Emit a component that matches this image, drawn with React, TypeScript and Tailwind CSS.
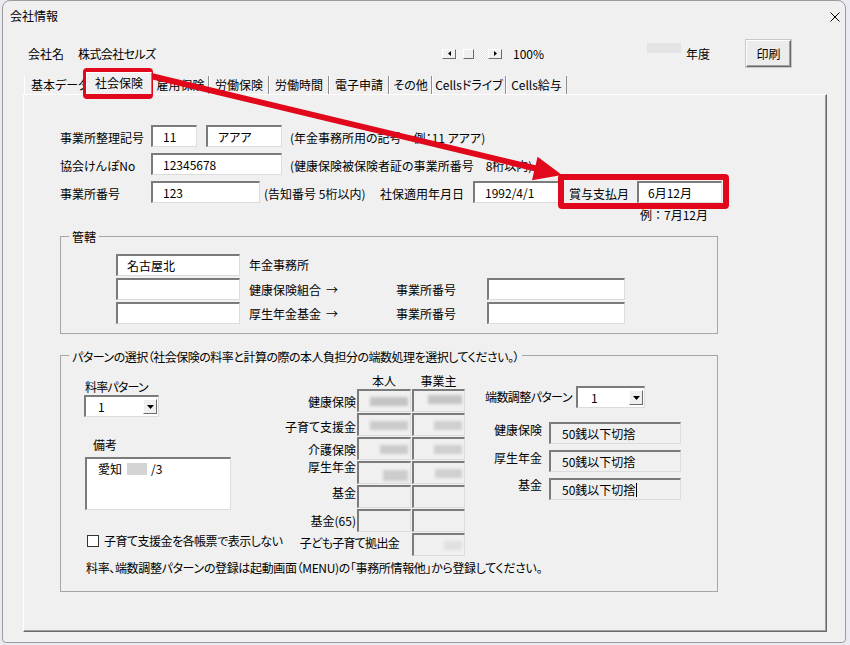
import React from "react";

type Kids = { children?: React.ReactNode; className?: string };

// Sunken edit box (classic VBA form look)
function Field({ children, className = "", ro = false }: Kids & { ro?: boolean }) {
  return (
    <div
      className={`flex shrink-0 items-center border-t-2 border-l-2 border-r border-b border-t-[#7b7b7b] border-l-[#7b7b7b] border-r-[#dcdcdc] border-b-[#dcdcdc] ${
        ro ? "bg-[#f0f0f0]" : "bg-white"
      } ${className}`}
    >
      {children}
    </div>
  );
}

const raised =
  "border border-t-white border-l-white border-r-[#6b6b6b] border-b-[#6b6b6b] bg-[#f0f0f0]";

function DropTri() {
  return (
    <svg width="7" height="4" viewBox="0 0 7 4">
      <path d="M0 0H7L3.5 4Z" fill="#000" />
    </svg>
  );
}

function Combo({ className = "" }: { className?: string }) {
  return (
    <Field className={`justify-between pr-[1px] ${className}`}>
      <span>1</span>
      <div className={`flex h-[15px] w-[14px] items-center justify-center ${raised}`}>
        <DropTri />
      </div>
    </Field>
  );
}

function GroupBox({
  title,
  className = "",
  legendClass = "",
  children,
}: Kids & { title: string; legendClass?: string }) {
  return (
    <div className={`relative border border-[#a6a6a6] ${className}`}>
      <span className={`absolute left-[8px] whitespace-nowrap bg-[#f0f0f0] px-[3px] leading-[16px] ${legendClass}`}>
        {title}
      </span>
      {children}
    </div>
  );
}

function Blur({ className = "" }: { className?: string }) {
  return <span className={`block blur-[1.5px] ${className}`} />;
}

const tabs = [
  { label: "雇用保険", w: "w-[57px]" },
  { label: "労働保険", w: "w-[60px]" },
  { label: "労働時間", w: "w-[60px]" },
  { label: "電子申請", w: "w-[60px]" },
  { label: "その他", w: "w-[43px]" },
  { label: "Cellsドライブ", w: "w-[74px]" },
  { label: "Cells給与", w: "w-[61px]" },
];

const premiumRows = [
  { label: "健康保険", lc: "pt-[5px]", a: "w-[38px] h-[9px] bg-[#c4c4c4]", b: "w-[34px] h-[9px] bg-[#c4c4c4] mb-[3px]" },
  { label: "子育て支援金", lc: "pt-[6px]", a: "w-[38px] h-[9px] bg-[#cbcbcb]", b: "w-[28px] h-[9px] bg-[#d0d0d0]" },
  { label: "介護保険", lc: "pt-[5px]", a: "w-[28px] h-[9px] bg-[#cbcbcb]", b: "w-[28px] h-[9px] bg-[#d0d0d0]" },
  { label: "厚生年金", lc: "-mt-[2px]", a: "w-[25px] h-[11px] bg-[#cdcdcd] mt-[4px]", b: "w-[27px] h-[9px] bg-[#d0d0d0]" },
  { label: "基金", lc: "pt-0", a: "", b: "" },
  { label: "基金(65)", lc: "pt-[4px]", a: "", b: "" },
];

const roundRows = [
  { label: "健康保険", lc: "pt-0" },
  { label: "厚生年金", lc: "pt-0" },
  { label: "基金", lc: "-mt-[1px]", caret: true },
];

export default function App() {
  return (
    <div className="relative h-[645px] w-[850px] overflow-hidden bg-[#e8ecf2] text-[12px] leading-[16px] text-black [font-family:'Noto_Sans_CJK_JP',sans-serif] [font-feature-settings:'palt']">
      <div className="ml-[2px] flex h-[643px] w-[844px] flex-col rounded-t-[8px] rounded-b-[4px] border border-[#9c9c9c] bg-[#f0f0f0]">
        {/* title bar */}
        <div className="flex h-[30px] items-center justify-between pl-[7px] pr-[5px]">
          <span>会社情報</span>
          <svg width="10" height="10" viewBox="0 0 10 10" className="mt-[1px]">
            <path d="M0.5 0.5L9.5 9.5M9.5 0.5L0.5 9.5" stroke="#000" strokeWidth="1" />
          </svg>
        </div>

        {/* company header */}
        <div className="mt-[9px] flex h-[27px] items-center pl-[25px]">
          <div className="flex w-[414px] items-center">
            <span className="w-[50px]">会社名</span>
            <span className="tracking-[-0.6px]">株式会社セルズ</span>
          </div>
          <div className="flex w-[71px] items-center">
            <div className={`flex h-[10px] w-[14px] items-center justify-center ${raised}`}>
              <svg width="3" height="5" viewBox="0 0 3 5">
                <path d="M3 0V5L0 2.5Z" fill="#000" />
              </svg>
            </div>
            <div className="h-[10px] w-[7px] bg-[#f4f4f4]" />
            <div className={`h-[10px] w-[11px] ${raised}`} />
            <div className="h-[10px] w-[14px] bg-[repeating-conic-gradient(#ffffff_0_25%,#e2e2e2_0_50%)] bg-[length:2px_2px]" />
            <div className={`flex h-[10px] w-[14px] items-center justify-center ${raised}`}>
              <svg width="3" height="5" viewBox="0 0 3 5">
                <path d="M0 0V5L3 2.5Z" fill="#000" />
              </svg>
            </div>
          </div>
          <span className="w-[134px]">100%</span>
          <div className="mb-[12px] h-[10px] w-[34px] bg-[#e4e4e4]" />
          <span className="ml-[5px] w-[60px]">年度</span>
          <div className="flex h-[27px] w-[45px] items-center justify-center border border-t-white border-l-white border-r-[#696969] border-b-[#696969] bg-[#ececec] shadow-[inset_-1px_-1px_0_#a0a0a0,0_0_0_1px_#c8c8c8]">
            印刷
          </div>
        </div>

        {/* tab strip */}
        <div className="mt-[5px] flex h-[22px] items-end pl-[21px]">
          <div className="h-[18px] w-[62px] whitespace-nowrap border-l border-white pl-[6px] leading-[18px]">
            基本データ
          </div>
          <div className="relative z-10 h-[22px] w-[66px] border-t border-l border-white border-r border-r-[#8a8a8a] bg-[#f0f0f0] text-center leading-[20px]">
            社会保険
          </div>
          {tabs.map((t) => (
            <div
              key={t.label}
              className={`h-[18px] border-l border-r border-l-white border-r-[#8e8e8e] text-center leading-[18px] ${t.w}`}
            >
              {t.label}
            </div>
          ))}
        </div>

        {/* tab page */}
        <div className="ml-[20px] h-[538px] w-[804px] border-t border-l border-r border-b border-t-white border-l-white border-r-[#696969] border-b-[#696969] pl-[36px] pt-[30px] shadow-[inset_-1px_-1px_0_#a0a0a0]">
          {/* office codes */}
          <div className="flex h-[22px] whitespace-nowrap">
            <span className="w-[91px] pt-[5px]">事業所整理記号</span>
            <Field className="w-[46px] pl-[10px]">11</Field>
            <Field className="ml-[9px] w-[76px] pl-[10px]">アアア</Field>
            <span className="ml-[8px] pt-[5px]">(年金事務所用の記号　例：11 アアア)</span>
          </div>
          <div className="mt-[6px] flex h-[22px] whitespace-nowrap">
            <span className="w-[91px] pt-[5px]">協会けんぽNo</span>
            <Field className="w-[131px] pl-[10px]">12345678</Field>
            <span className="ml-[8px] pt-[5px]">(健康保険被保険者証の事業所番号　8桁以内)</span>
          </div>
          <div className="mt-[6px] flex h-[22px] whitespace-nowrap">
            <span className="w-[91px] pt-[5px]">事業所番号</span>
            <Field className="w-[109px] pl-[10px]">123</Field>
            <span className="ml-[4px] w-[116px] pt-[5px]">(告知番号 5桁以内)</span>
            <span className="w-[93px] pt-[5px]">社保適用年月日</span>
            <Field className="w-[87px] pl-[10px]">1992/4/1</Field>
            <span className="ml-[9px] w-[68px] pt-[5px]">賞与支払月</span>
            <Field className="w-[85px] pl-[9px]">6月12月</Field>
          </div>
          <div className="mt-[4px] h-[16px] pl-[580px] [font-feature-settings:normal]">例：7月12月</div>

          {/* jurisdiction */}
          <GroupBox title="管轄" legendClass="-top-[8px]" className="mt-[13px] h-[98px] w-[658px] pl-[55px] pt-[17px]">
            <div className="flex flex-col gap-[2px]">
              <div className="flex h-[22px] items-center">
                <Field className="h-[22px] w-[124px] pl-[9px]">名古屋北</Field>
                <span className="ml-[9px]">年金事務所</span>
              </div>
              {["健康保険組合", "厚生年金基金"].map((l) => (
                <div key={l} className="flex h-[22px] items-center">
                  <Field className="h-[22px] w-[124px]" />
                  <span className="ml-[9px] w-[147px] pt-[1px]">
                    {l}
                    <span className="ml-[5px]">→</span>
                  </span>
                  <span className="w-[91px] pt-[1px]">事業所番号</span>
                  <Field className="h-[22px] w-[138px]" />
                </div>
              ))}
            </div>
          </GroupBox>

          {/* rate pattern */}
          <GroupBox
            title="パターンの選択（社会保険の料率と計算の際の本人負担分の端数処理を選択してください。）"
            legendClass="-top-[7px] tracking-[-0.5px]"
            className="mt-[21px] h-[237px] w-[658px] pl-[23px] pt-[19px]"
          >
            <div className="flex items-start">
              {/* left column */}
              <div className="flex w-[200px] shrink-0 flex-col items-start">
                <span className="pl-[1px] pt-[4px] tracking-[-0.8px]">料率パターン</span>
                <Combo className="h-[22px] w-[75px] pl-[12px]" />
                <span className="mt-[20px] pl-[9px]">備考</span>
                <Field className="ml-[1px] mt-[4px] h-[53px] w-[146px] items-start pl-[11px] pt-[2px]">
                  <span>愛知</span>
                  <span className="ml-[5px] mt-[2px] h-[12px] w-[20px] bg-[#d4d4d4]" />
                  <span className="ml-[4px]">/3</span>
                </Field>
                <div className="ml-[3px] mt-[23px] flex items-center whitespace-nowrap">
                  <span className="h-[12px] w-[12px] border border-[#333] bg-white" />
                  <span className="ml-[5px] tracking-[-0.5px]">子育て支援金を各帳票で表示しない</span>
                </div>
              </div>

              {/* premium grid */}
              <div className="w-[184px] shrink-0">
                <div className="-mt-[2px] grid h-[16px] grid-cols-[72px_54px_53px] gap-x-[1px]">
                  <span />
                  <span className="text-center">本人</span>
                  <span className="text-center">事業主</span>
                </div>
                <div className="grid grid-cols-[72px_54px_53px] auto-rows-[23px] gap-x-[1px] gap-y-[1px]">
                  {premiumRows.map((r) => (
                    <React.Fragment key={r.label}>
                      <span className={`whitespace-nowrap text-right ${r.lc}`}>{r.label}</span>
                      <Field ro className="justify-end pr-[2px]">
                        {r.a && <Blur className={r.a} />}
                      </Field>
                      <Field ro className="justify-end pr-[2px]">
                        {r.b && <Blur className={r.b} />}
                      </Field>
                    </React.Fragment>
                  ))}
                  <span className="col-span-2 whitespace-nowrap pr-[12px] pt-[2px] text-right tracking-[-0.7px]">
                    子ども子育て拠出金
                  </span>
                  <Field ro className="justify-end pr-[2px]">
                    <Blur className="h-[9px] w-[18px] bg-[#e0e0e0]" />
                  </Field>
                </div>
              </div>

              {/* rounding */}
              <div className="ml-[17px] shrink-0 pt-[11px]">
                <div className="flex items-center">
                  <span className="w-[91px] shrink-0 whitespace-nowrap tracking-[-0.6px]">端数調整パターン</span>
                  <Combo className="h-[22px] w-[69px] pl-[13px]" />
                </div>
                <div className="mt-[14px] grid grid-cols-[57px_132px] auto-rows-[22px] gap-x-[7px] gap-y-[6px]">
                  {roundRows.map((r) => (
                    <React.Fragment key={r.label}>
                      <span className={`whitespace-nowrap text-right ${r.lc}`}>{r.label}</span>
                      <Field ro className="pl-[11px]">
                        <span>50銭以下切捨</span>
                        {r.caret && <span className="ml-[1px] h-[14px] w-[1px] bg-black" />}
                      </Field>
                    </React.Fragment>
                  ))}
                </div>
              </div>
            </div>
            <div className="mt-[4px] whitespace-nowrap pl-[2px] tracking-[-0.35px]">
              料率、端数調整パターンの登録は起動画面（MENU)の「事務所情報他」から登録してください。
            </div>
          </GroupBox>
        </div>
      </div>

      {/* callouts */}
      <div className="pointer-events-none absolute left-[83px] top-[68px] h-[31px] w-[70px] rounded-[4px] border-[6px] border-[#e0081a]" />
      <div className="pointer-events-none absolute left-[558px] top-[174px] h-[35px] w-[171px] rounded-[4px] border-[6px] border-[#e0081a]" />
      <svg className="pointer-events-none absolute left-0 top-0" width="850" height="645" viewBox="0 0 850 645">
        <line x1="151" y1="76" x2="540" y2="169.5" stroke="#e0081a" strokeWidth="6" />
        <polygon points="562,175 532,180.2 537.6,156.8" fill="#e0081a" />
      </svg>
    </div>
  );
}
